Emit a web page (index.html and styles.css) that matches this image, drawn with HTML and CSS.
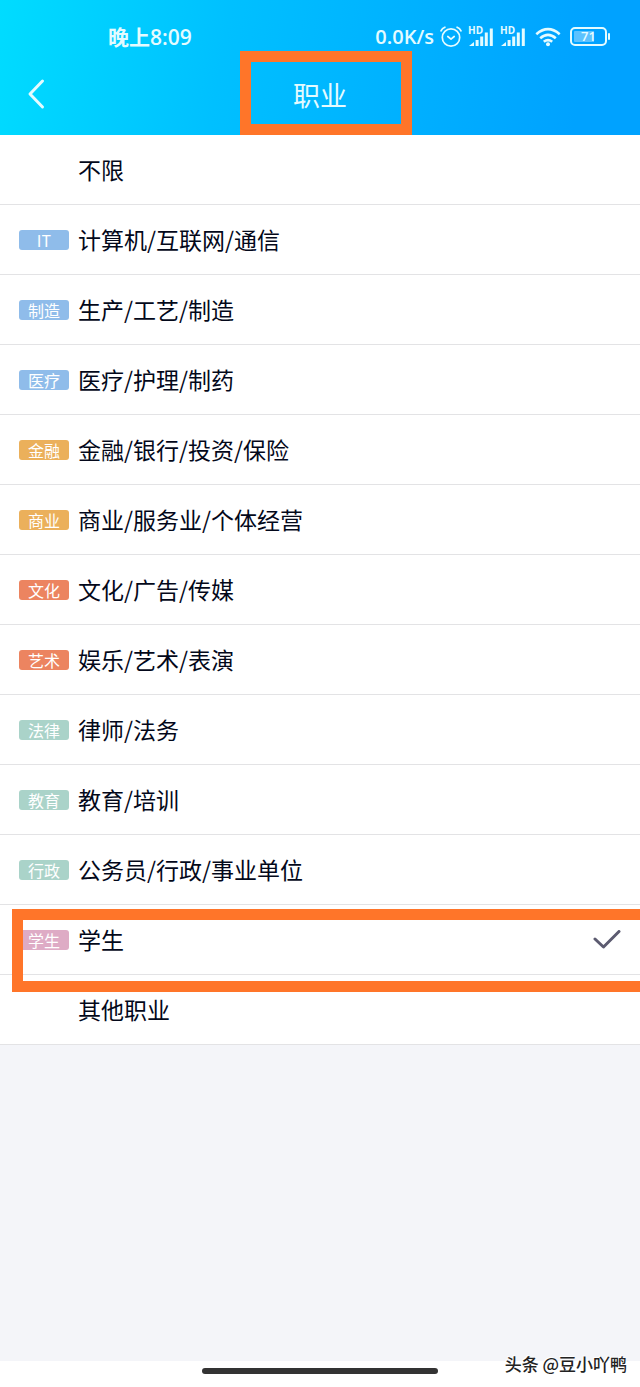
FILE: index.html
```
<!DOCTYPE html>
<html lang="zh-CN">
<head>
    <meta charset="UTF-8">
    <meta name="viewport" content="width=device-width, initial-scale=1.0">
    <title>职业</title>
    <link rel="stylesheet" href="styles.css">
</head>
<body>
    <header class="header">
        <div class="status-bar">
            <span class="status-time">晚上8:09</span>
            <div class="status-icons">
                <span class="speed">0.0K/s</span>
                <svg class="alarm" width="22" height="22" viewBox="0 0 22 22" fill="none" stroke="currentColor" stroke-width="1.7" stroke-linecap="round" stroke-linejoin="round">
                    <circle cx="11" cy="11.5" r="8.7"/>
                    <path d="M7.8 10.5l3.2 2.7 3.2-2.7M1 4.8Q2.2 2.3 4.9 1.2M21 4.8Q19.8 2.3 17.1 1.2"/>
                </svg>
                <div class="signal">
                    <span class="hd">HD</span>
                    <svg width="26" height="20" viewBox="0 0 26 20" fill="currentColor">
                        <path d="M1 19l5-4v4zM7.6 13h3v6h-3zM12.2 9.5h3V19h-3zM16.8 5.5h3V19h-3zM21.8 1.5h3V19h-3z"/>
                    </svg>
                </div>
                <div class="signal">
                    <span class="hd">HD</span>
                    <svg width="26" height="20" viewBox="0 0 26 20" fill="currentColor">
                        <path d="M1 19l5-4v4zM7.6 13h3v6h-3zM12.2 9.5h3V19h-3zM16.8 5.5h3V19h-3zM21.8 1.5h3V19h-3z"/>
                    </svg>
                </div>
                <svg class="wifi" width="26" height="20" viewBox="0 0 26 20" fill="none" stroke="currentColor" stroke-width="2.6">
                    <path d="M1.3 7.2Q13-2.8 24.7 7.2M5.2 11.2Q13 4.4 20.8 11.2M8.8 14.8Q13 11.4 17.2 14.8"/>
                    <circle cx="13" cy="17.2" r="2" fill="currentColor" stroke="none"/>
                </svg>
                <div class="battery"><span>71</span></div>
            </div>
        </div>
        <div class="nav">
            <button class="back" type="button" aria-label="返回">
                <svg width="20" height="32" viewBox="0 0 20 32" fill="none" stroke="currentColor" stroke-width="3" stroke-linecap="round" stroke-linejoin="round">
                    <path d="M16.5 3L4 16l12.500 13"/>
                </svg>
            </button>
            <h1>职业</h1>
            <div class="mark mark-title"></div>
        </div>
    </header>

    <main class="content">
        <form class="job-list">
            <label class="job">
                <input type="radio" name="job">
                <span class="tag-slot"></span>
                <span class="job-name">不限</span>
            </label>
            <label class="job">
                <input type="radio" name="job">
                <span class="tag-slot tag blue">IT</span>
                <span class="job-name">计算机/互联网/通信</span>
            </label>
            <label class="job">
                <input type="radio" name="job">
                <span class="tag-slot tag blue">制造</span>
                <span class="job-name">生产/工艺/制造</span>
            </label>
            <label class="job">
                <input type="radio" name="job">
                <span class="tag-slot tag blue">医疗</span>
                <span class="job-name">医疗/护理/制药</span>
            </label>
            <label class="job">
                <input type="radio" name="job">
                <span class="tag-slot tag yellow">金融</span>
                <span class="job-name">金融/银行/投资/保险</span>
            </label>
            <label class="job">
                <input type="radio" name="job">
                <span class="tag-slot tag yellow">商业</span>
                <span class="job-name">商业/服务业/个体经营</span>
            </label>
            <label class="job">
                <input type="radio" name="job">
                <span class="tag-slot tag red">文化</span>
                <span class="job-name">文化/广告/传媒</span>
            </label>
            <label class="job">
                <input type="radio" name="job">
                <span class="tag-slot tag red">艺术</span>
                <span class="job-name">娱乐/艺术/表演</span>
            </label>
            <label class="job">
                <input type="radio" name="job">
                <span class="tag-slot tag green">法律</span>
                <span class="job-name">律师/法务</span>
            </label>
            <label class="job">
                <input type="radio" name="job">
                <span class="tag-slot tag green">教育</span>
                <span class="job-name">教育/培训</span>
            </label>
            <label class="job">
                <input type="radio" name="job">
                <span class="tag-slot tag green">行政</span>
                <span class="job-name">公务员/行政/事业单位</span>
            </label>
            <label class="job">
                <input type="radio" name="job" checked>
                <span class="tag-slot tag pink">学生</span>
                <span class="job-name">学生</span>
                <svg class="check" width="28" height="20" viewBox="0 0 28 20" fill="none" stroke="currentColor" stroke-width="3" stroke-linecap="round" stroke-linejoin="round">
                    <path d="M2 9l8.500 8L26 1.500"/>
                </svg>
                <span class="mark mark-row"></span>
            </label>
            <label class="job">
                <input type="radio" name="job">
                <span class="tag-slot"></span>
                <span class="job-name">其他职业</span>
            </label>
        </form>
    </main>

    <footer class="footer">
        <div class="home-bar"></div>
        <span class="watermark">头条 @豆小吖鸭</span>
    </footer>
</body>
</html>
```
FILE: styles.css
```
* {
    margin: 0;
    padding: 0;
    box-sizing: border-box;
}
body {
    min-height: 100vh;
    display: flex;
    flex-direction: column;
    overflow-x: hidden;
    background: #f4f5f9;
    color: #03081a;
    font-family: "Noto Sans CJK SC", sans-serif;
}

/* header */
.header {
    background: linear-gradient(100deg, #00dcff 0%, #00c0ff 35%, #00a2ff 90%);
    color: #e4fbff;
}
.status-bar {
    height: 51px;
    padding: 22px 33px 0 108px;
    display: flex;
    align-items: center;
    justify-content: space-between;
    font-family: "Open Sans", "Noto Sans CJK SC", sans-serif;
    font-size: 20px;
    font-weight: 600;
    line-height: 28px;
}
.status-time {
    font-size: 21px;
}
.status-icons {
    display: flex;
    align-items: center;
    gap: 6px;
}
.signal {
    position: relative;
    display: flex;
}
.hd {
    position: absolute;
    top: -2px;
    left: 0;
    font-size: 10px;
    font-weight: 700;
    line-height: 10px;
}
.wifi {
    margin: 0 3px;
}
.battery {
    position: relative;
    width: 37px;
    height: 19px;
    border: 2px solid currentColor;
    border-radius: 5px;
    background: linear-gradient(90deg, #5cc2ff 68%, transparent 68%) content-box;
    padding: 2px;
    display: flex;
    align-items: center;
    justify-content: center;
    font-size: 13px;
    line-height: 13px;
}
.battery::after {
    content: "";
    position: absolute;
    right: -5px;
    top: 4px;
    width: 2px;
    height: 7px;
    border-radius: 1px;
    background: currentColor;
}
.nav {
    position: relative;
    height: 84px;
    padding-top: 4px;
    display: flex;
    align-items: center;
    justify-content: center;
}
.nav h1 {
    font-size: 27px;
    font-weight: 400;
    line-height: 40px;
}
.back {
    position: absolute;
    left: 26px;
    top: 27px;
    display: flex;
    border: none;
    background: none;
    color: inherit;
    cursor: pointer;
}

/* orange frames */
.mark {
    position: absolute;
    border: 11px solid #ff7529;
    pointer-events: none;
}
.mark-title {
    top: 0;
    bottom: 0;
    left: calc(50% - 80px);
    width: 172px;
}
.mark-row {
    top: 4px;
    left: 12px;
    right: -11px;
    height: 83px;
    z-index: 1;
}

/* list */
.content {
    flex: 1;
}
.job-list {
    background: #fff;
}
.job {
    position: relative;
    height: 70px;
    padding: 0 19px;
    display: flex;
    align-items: center;
    border-bottom: 1px solid #e3e3e5;
    cursor: pointer;
}
.job input {
    position: absolute;
    opacity: 0;
}
.job-name {
    flex: 1;
    padding-bottom: 2px;
    font-size: 23px;
    line-height: 34px;
}
.tag-slot {
    width: 50px;
    margin-right: 9px;
}
.tag {
    height: 20px;
    border-radius: 3px;
    color: #fff;
    font-size: 16px;
    line-height: 21px;
    text-align: center;
}
.blue {
    background: #8fbcea;
}
.yellow {
    background: #ebb05b;
}
.red {
    background: #ec8460;
}
.green {
    background: #aad3c9;
}
.pink {
    background: #deabc5;
}
.check {
    color: #5c5b70;
}

/* bottom */
.footer {
    position: relative;
    height: 26px;
    background: #fff;
    display: flex;
    justify-content: center;
    padding-top: 7px;
}
.home-bar {
    width: 37%;
    height: 6px;
    border-radius: 3px;
    background: #333;
}
.watermark {
    position: absolute;
    right: 13px;
    bottom: 13px;
    color: #222;
    font-size: 17px;
    font-weight: 500;
    line-height: 20px;
    text-shadow: -1px -1px 0 #fff;
}
```
